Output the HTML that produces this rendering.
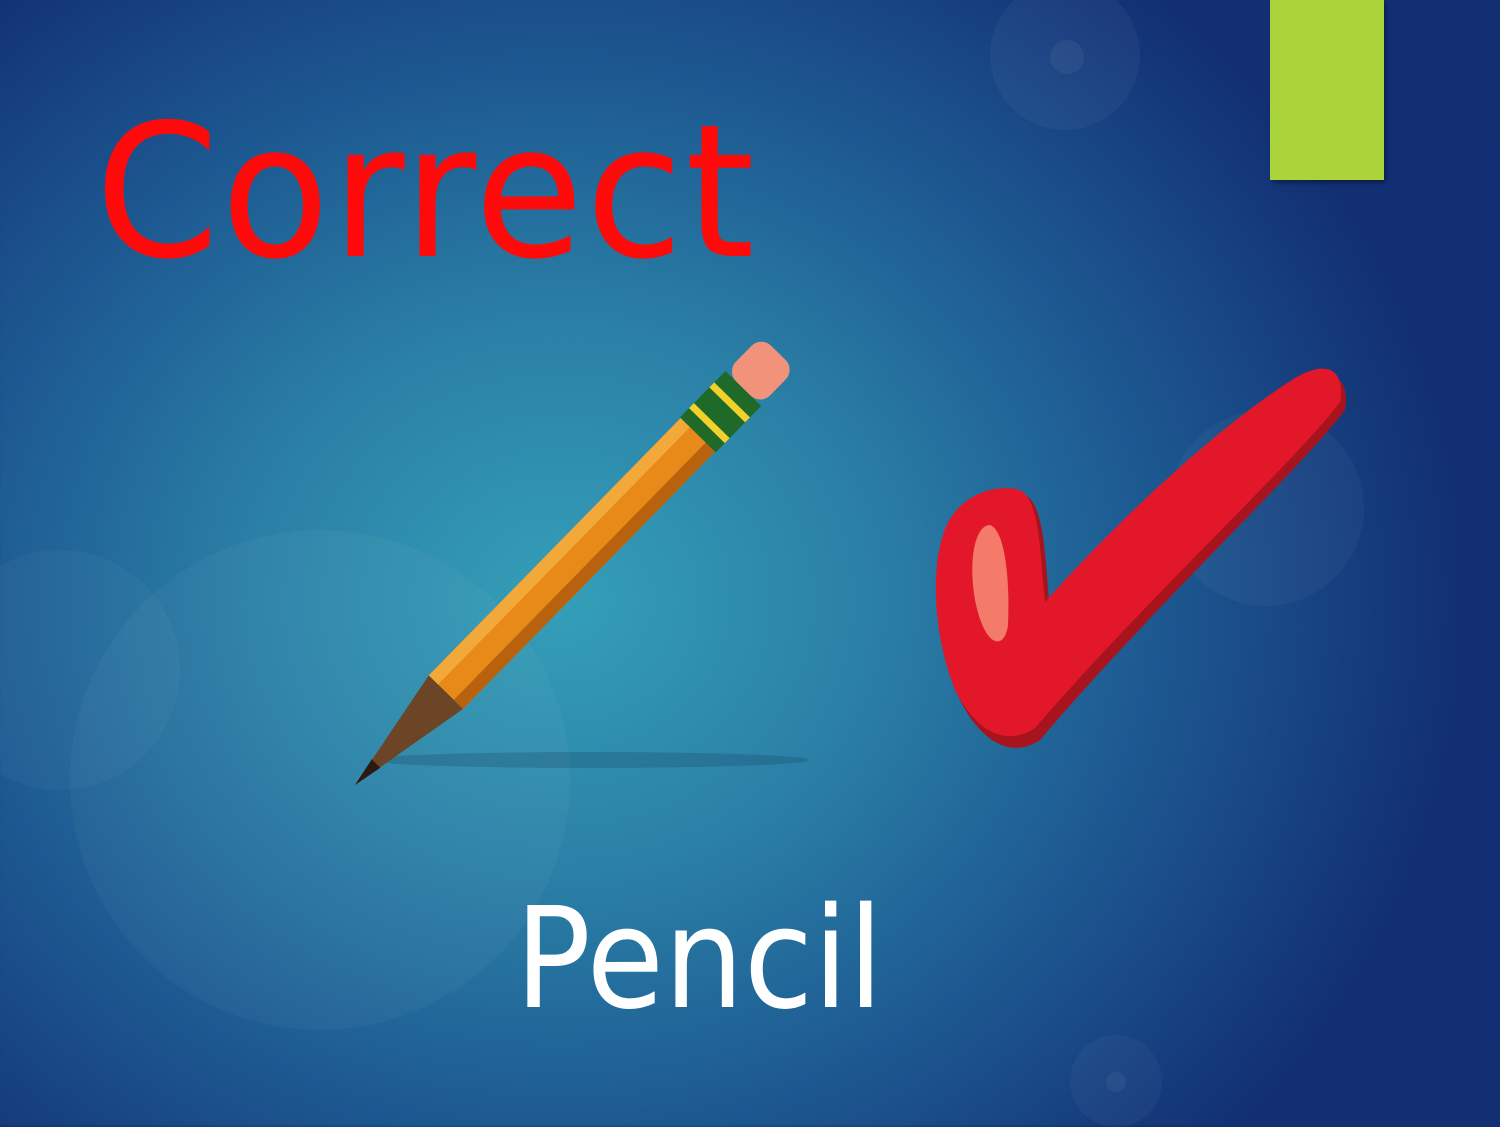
<!DOCTYPE html>
<html><head><meta charset="utf-8"><style>
html,body{margin:0;padding:0}
body{width:1500px;height:1125px;overflow:hidden;position:relative;
background:radial-gradient(ellipse 900px 800px at 560px 600px,#349fb8 0%,#2a7fa6 35%,#1d5a92 65%,#122f74 100%);}
.c{position:absolute;border-radius:50%;}
.t1{position:absolute;left:95px;top:100px;font-family:"DejaVu Sans","Liberation Sans",sans-serif;font-size:185px;color:#ff0a0a;letter-spacing:2px;line-height:1;transform:scaleX(0.96);transform-origin:0 0}
.t2{position:absolute;left:515px;top:890px;font-family:"DejaVu Sans","Liberation Sans",sans-serif;font-size:140px;color:#fff;line-height:1;transform:scaleX(0.9);transform-origin:0 0}
.g{position:absolute;left:1270px;top:0;width:114px;height:180px;background:#aad43a;box-shadow:2px 3px 4px rgba(0,0,0,.35)}
</style></head><body>
<div class="c" style="left:70px;top:530px;width:500px;height:500px;background:rgba(255,255,255,.035)"></div>
<div class="c" style="left:-60px;top:550px;width:240px;height:240px;background:rgba(255,255,255,.03)"></div>
<div class="c" style="left:990px;top:-20px;width:150px;height:150px;background:rgba(255,255,255,.04)"></div>
<div class="c" style="left:1050px;top:40px;width:34px;height:34px;background:rgba(255,255,255,.05)"></div>
<div class="c" style="left:1168px;top:410px;width:196px;height:196px;background:rgba(255,255,255,.035)"></div>
<div class="c" style="left:1070px;top:1035px;width:92px;height:92px;background:rgba(255,255,255,.035)"></div>
<div class="c" style="left:1106px;top:1072px;width:20px;height:20px;background:rgba(255,255,255,.05)"></div>
<div class="g"></div>
<div class="t1">Correct</div>
<div class="t2">Pencil</div>
<svg width="1500" height="1125" style="position:absolute;left:0;top:0">
<ellipse cx="590" cy="760" rx="220" ry="8" fill="rgba(20,40,70,.2)"/>
<g transform="translate(355,785) rotate(-45.6)">
<polygon points="0,0 130,-24 130,24" fill="#6b4526"/>
<polygon points="0,0 30,-6 30,6" fill="#2a1a10"/>
<rect x="130" y="-24" width="365" height="48" fill="#e88a1a"/>
<rect x="130" y="-24" width="365" height="13" fill="#f3a83a"/>
<rect x="130" y="11" width="365" height="13" fill="#b8620e"/>
<rect x="490" y="-25" width="65" height="50" fill="#1f6a28"/>
<rect x="503" y="-25" width="7" height="50" fill="#f2d22a"/>
<rect x="532" y="-25" width="7" height="50" fill="#f2d22a"/>
<rect x="555" y="-24" width="50" height="48" rx="14" fill="#f0937a"/>
</g>
<path d="M960,700 C940,650 935,580 948,540 C960,500 1000,488 1025,495 C1045,505 1045,560 1050,610 C1130,520 1230,430 1300,385 C1335,365 1350,380 1345,410 C1300,470 1150,610 1040,740 C1010,760 980,740 960,700 Z" fill="#a8141e"/>
<path d="M955,690 C935,640 930,575 943,535 C955,495 995,483 1020,490 C1040,500 1040,555 1045,602 C1125,512 1225,422 1295,378 C1330,358 1345,372 1340,402 C1295,462 1145,600 1035,728 C1005,748 975,730 955,690 Z" fill="#e2182a"/>
<path d="M975,600 C968,560 975,525 990,525 C1005,530 1010,580 1008,625 C1005,650 985,650 975,600 Z" fill="#f47a6a"/>
</svg>
</body></html>
